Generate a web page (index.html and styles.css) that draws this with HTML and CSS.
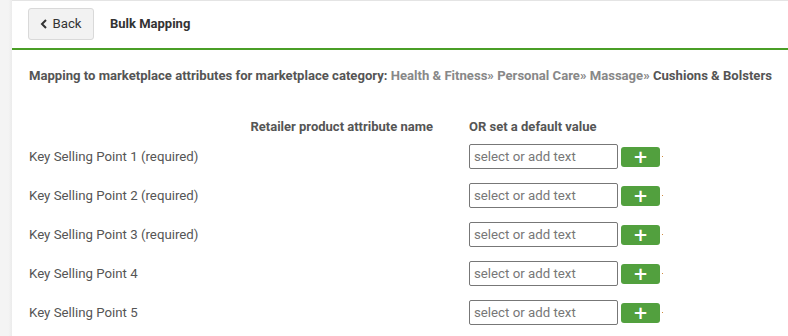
FILE: index.html
```html
<!DOCTYPE html>
<html lang="en">
<head>
    <meta charset="UTF-8">
    <meta name="viewport" content="width=device-width, initial-scale=1.0">
    <title>Bulk Mapping</title>
    <link rel="stylesheet" href="styles.css">
</head>
<body>
    <div class="sidebar"></div>
    <div class="main">
        <div class="header">
            <button class="back-btn">
                <svg width="8" height="10" viewBox="0 0 8 10"><path d="M6 1 L2 5 L6 9" fill="none" stroke="#333" stroke-width="2"/></svg>
                Back
            </button>
            <span class="title">Bulk Mapping</span>
        </div>
        <div class="content">
            <p class="category">Mapping to marketplace attributes for marketplace category: <span class="crumb">Health &amp; Fitness&raquo; Personal Care&raquo; Massage&raquo;</span> Cushions &amp; Bolsters</p>

            <div class="mapping">
                <div class="col-head attr-head">Retailer product attribute name</div>
                <div class="col-head">OR set a default value</div>

                <div class="label">Key Selling Point 1 (required)</div>
                <div class="value"><input type="text" placeholder="select or add text"><button class="add-btn">+</button><span class="dot"></span></div>

                <div class="label">Key Selling Point 2 (required)</div>
                <div class="value"><input type="text" placeholder="select or add text"><button class="add-btn">+</button><span class="dot"></span></div>

                <div class="label">Key Selling Point 3 (required)</div>
                <div class="value"><input type="text" placeholder="select or add text"><button class="add-btn">+</button><span class="dot"></span></div>

                <div class="label">Key Selling Point 4</div>
                <div class="value"><input type="text" placeholder="select or add text"><button class="add-btn">+</button><span class="dot"></span></div>

                <div class="label">Key Selling Point 5</div>
                <div class="value"><input type="text" placeholder="select or add text"><button class="add-btn">+</button><span class="dot"></span></div>
            </div>
        </div>
    </div>
</body>
</html>
```

FILE: styles.css
```css
body {
    font-family: Roboto, "Liberation Sans", sans-serif;
    margin: 0;
    padding: 0;
    display: flex;
    min-height: 336px;
    background-color: #fff;
    color: #555;
    font-size: 13.25px;
}
.sidebar {
    width: 12px;
    flex-shrink: 0;
    background: linear-gradient(to right, #f4f4f4 70%, #ebebeb);
}
.main {
    flex-grow: 1;
    border-top: 1px solid #e4e4e4;
}
.header {
    display: flex;
    align-items: center;
    height: 49px;
    padding: 0 16px 2px;
    border-bottom: 2px solid #4a9e26;
    box-sizing: border-box;
}
.back-btn {
    display: flex;
    align-items: center;
    gap: 4px;
    height: 32px;
    width: 66px;
    justify-content: center;
    background-color: #f2f2f2;
    border: 1px solid #d9d9d9;
    border-radius: 3px;
    font-family: Roboto, sans-serif;
    font-size: 13.25px;
    color: #333;
    padding: 0;
}
.title {
    margin-left: 16px;
    font-weight: bold;
    font-size: 13px;
    color: #333;
}
.content {
    padding: 0 17px;
}
.category {
    margin: 18px 0 0;
    font-weight: bold;
    font-size: 13.1px;
    color: #555;
    line-height: 15px;
    white-space: nowrap;
}
.crumb {
    color: #888;
}
.mapping {
    display: grid;
    grid-template-columns: 440px auto;
    grid-template-rows: 20px;
    grid-auto-rows: 39px;
    margin-top: 34px;
}
.col-head {
    font-weight: bold;
    font-size: 13px;
    color: #555;
    line-height: 20px;
}
.attr-head {
    text-align: right;
    padding-right: 36px;
}
.label {
    display: flex;
    align-items: center;
}
.value {
    display: flex;
    align-items: center;
}
.value input {
    width: 149px;
    height: 25px;
    box-sizing: border-box;
    border: 1px solid #777;
    border-radius: 2px;
    padding: 0 4px;
    font-family: Roboto, sans-serif;
    font-size: 13.25px;
    color: #333;
}
.value input::placeholder {
    color: #777;
}
.add-btn {
    margin-left: 3px;
    width: 39px;
    height: 20px;
    background-color: #52a03e;
    border: none;
    border-radius: 3px;
    color: #fff;
    font-weight: bold;
    font-size: 18px;
    line-height: 20px;
    padding: 0;
    font-family: "DejaVu Sans", sans-serif;
}
.dot {
    width: 1px;
    height: 1px;
    margin-left: 2px;
    background-color: #d08a40;
}
```
